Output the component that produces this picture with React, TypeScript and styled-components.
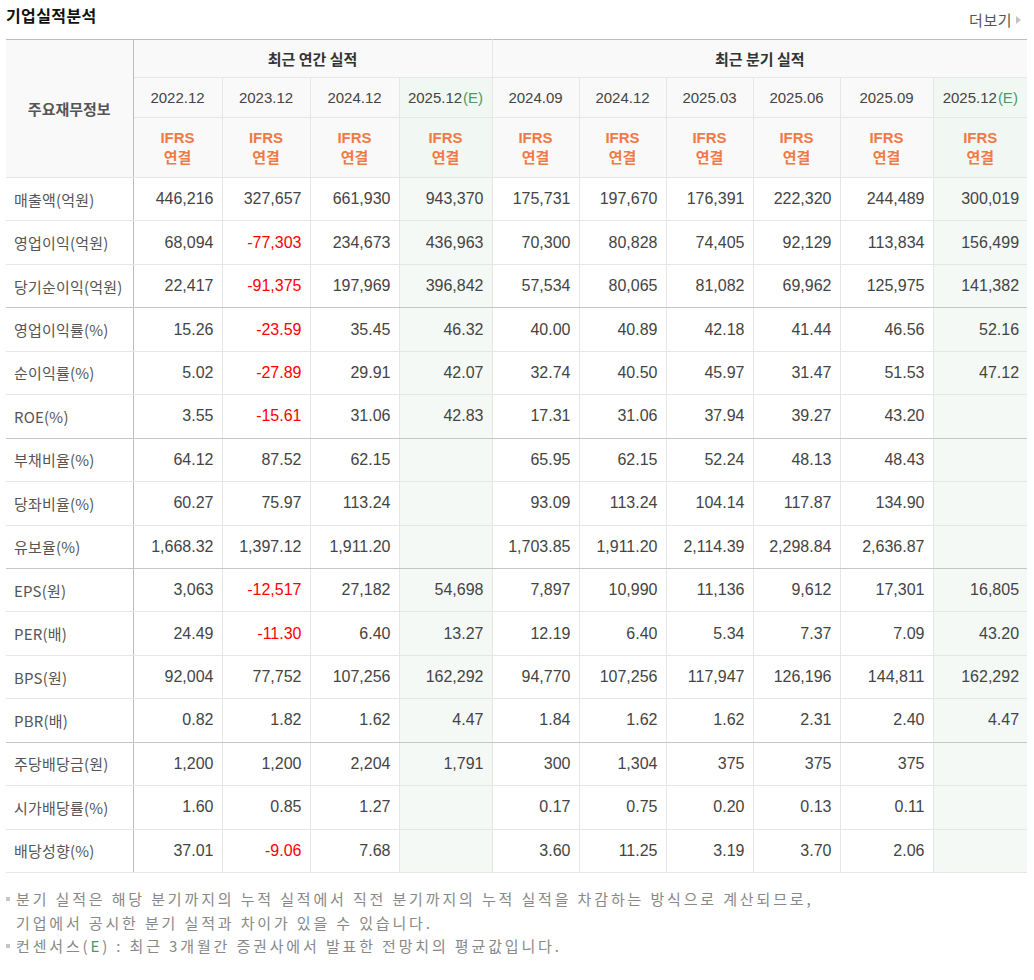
import React from "react";
import styled, { createGlobalStyle, css } from "styled-components";

const Global = createGlobalStyle`
  html, body { margin: 0; padding: 0; background: #fff; }
  body { font-family: "Liberation Sans", "Noto Sans CJK KR", sans-serif; color: #333; }
`;

const Page = styled.div`
  padding: 6px 7px 20px 6px;
  width: 1021px;
`;

const TitleBar = styled.div`
  display: flex;
  align-items: flex-start;
  justify-content: space-between;
  height: 33px;
`;

const Title = styled.h2`
  margin: 0;
  padding-top: 0;
  font-family: "Noto Sans CJK KR", sans-serif;
  font-size: 16px;
  font-weight: 700;
  color: #111;
  letter-spacing: 0.4px;
  line-height: 19px;
`;

const More = styled.a`
  display: flex;
  align-items: center;
  gap: 4px;
  margin-top: 4px;
  margin-right: 6px;
  font-family: "Noto Sans CJK KR", sans-serif;
  font-size: 15px;
  color: #555;
  text-decoration: none;
  line-height: 20px;
  letter-spacing: 0.5px;
`;

const Tri = styled.span`
  width: 0;
  height: 0;
  border-top: 4px solid transparent;
  border-bottom: 4px solid transparent;
  border-left: 5px solid #c4c4c4;
`;

const Table = styled.table`
  width: 1021px;
  border-collapse: collapse;
  table-layout: fixed;
  border-top: 1px solid #bdbdbd;
  border-bottom: 1px solid #bdbdbd;
`;

const Th = styled.th<{ $est?: boolean; $div?: boolean; $h?: number; $label?: boolean }>`
  background: ${(p) => (p.$est ? "#f1f7f3" : "#f9f9f9")};
  border: 1px solid #e6e6e6;
  border-top: none;
  ${(p) => p.$div && css`border-left: 1px solid #bdbdbd;`}
  ${(p) => p.$label && css`border-right: 1px solid #bdbdbd;`}
  height: ${(p) => p.$h ?? 37}px;
  padding: 0;
  font-weight: 400;
  text-align: center;
  vertical-align: middle;
  &:first-child { border-left: none; }
  &:last-child { border-right: none; }
`;

const GroupTitle = styled.span`
  font-family: "Noto Sans CJK KR", sans-serif;
  font-size: 15px;
  font-weight: 700;
  color: #333;
`;

const LabelHead = styled.span`
  font-family: "Noto Sans CJK KR", sans-serif;
  font-size: 15px;
  font-weight: 700;
  color: #555;
`;

const DateText = styled.span`
  font-family: "Liberation Sans", sans-serif;
  font-size: 15px;
  color: #444;
`;

const Est = styled.span`
  color: #4c9a63;
  margin-left: 1px;
`;

const Ifrs = styled.div`
  font-family: "Liberation Sans", "Noto Sans CJK KR", sans-serif;
  font-size: 15px;
  font-weight: 700;
  color: #ef7a45;
  line-height: 20px;
`;

const Row = styled.tr<{ $end?: boolean }>`
  height: 43.44px;
  ${(p) => p.$end && css`& > td { border-bottom: 1px solid #c6c6c6; }`}
`;

const Label = styled.td`
  border: 1px solid #e6e6e6;
  border-left: none;
  border-right: 1px solid #bdbdbd;
  padding: 0 0 0 8px;
  font-family: "Noto Sans CJK KR", sans-serif;
  font-size: 15px;
  color: #555;
  text-align: left;
  vertical-align: middle;
  white-space: nowrap;
  letter-spacing: 0.2px;
`;

const Cell = styled.td<{ $est?: boolean; $div?: boolean; $neg?: boolean }>`
  border: 1px solid #e6e6e6;
  ${(p) => p.$div && css`border-left: 1px solid #bdbdbd;`}
  background: ${(p) => (p.$est ? "#f4f9f6" : "#fff")};
  padding: 0 8px 0 0;
  text-align: right;
  vertical-align: middle;
  font-family: "Liberation Sans", sans-serif;
  font-size: 16px;
  color: ${(p) => (p.$neg ? "#ff0000" : "#444")};
  &:last-child { border-right: none; }
`;

const Notes = styled.ul`
  list-style: none;
  margin: 14px 0 0 0;
  padding: 0;
`;

const Note = styled.li`
  position: relative;
  padding-left: 10px;
  font-family: "Noto Sans CJK KR", sans-serif;
  font-size: 15px;
  line-height: 23.5px;
  color: #888;
  letter-spacing: 2.85px;
  white-space: nowrap;
  &::before {
    content: "";
    position: absolute;
    left: 0;
    top: 10px;
    width: 4px;
    height: 4px;
    background: #c8c8c8;
  }
`;

const NoteLine = styled.div``;

const Green = styled.span`
  color: #4c9a63;
`;

const widths = [127, 89, 88, 89, 93, 87, 87, 87, 87, 93, 94];
const dates = ["2022.12", "2023.12", "2024.12", "2025.12", "2024.09", "2024.12", "2025.03", "2025.06", "2025.09", "2025.12"];
const estCols = new Set([3, 9]);

type RowData = { label: string; v: string[]; end?: boolean };

const rows: RowData[] = [
  { label: "매출액(억원)", v: ["446,216", "327,657", "661,930", "943,370", "175,731", "197,670", "176,391", "222,320", "244,489", "300,019"] },
  { label: "영업이익(억원)", v: ["68,094", "-77,303", "234,673", "436,963", "70,300", "80,828", "74,405", "92,129", "113,834", "156,499"] },
  { label: "당기순이익(억원)", v: ["22,417", "-91,375", "197,969", "396,842", "57,534", "80,065", "81,082", "69,962", "125,975", "141,382"], end: true },
  { label: "영업이익률(%)", v: ["15.26", "-23.59", "35.45", "46.32", "40.00", "40.89", "42.18", "41.44", "46.56", "52.16"] },
  { label: "순이익률(%)", v: ["5.02", "-27.89", "29.91", "42.07", "32.74", "40.50", "45.97", "31.47", "51.53", "47.12"] },
  { label: "ROE(%)", v: ["3.55", "-15.61", "31.06", "42.83", "17.31", "31.06", "37.94", "39.27", "43.20", ""], end: true },
  { label: "부채비율(%)", v: ["64.12", "87.52", "62.15", "", "65.95", "62.15", "52.24", "48.13", "48.43", ""] },
  { label: "당좌비율(%)", v: ["60.27", "75.97", "113.24", "", "93.09", "113.24", "104.14", "117.87", "134.90", ""] },
  { label: "유보율(%)", v: ["1,668.32", "1,397.12", "1,911.20", "", "1,703.85", "1,911.20", "2,114.39", "2,298.84", "2,636.87", ""], end: true },
  { label: "EPS(원)", v: ["3,063", "-12,517", "27,182", "54,698", "7,897", "10,990", "11,136", "9,612", "17,301", "16,805"] },
  { label: "PER(배)", v: ["24.49", "-11.30", "6.40", "13.27", "12.19", "6.40", "5.34", "7.37", "7.09", "43.20"] },
  { label: "BPS(원)", v: ["92,004", "77,752", "107,256", "162,292", "94,770", "107,256", "117,947", "126,196", "144,811", "162,292"] },
  { label: "PBR(배)", v: ["0.82", "1.82", "1.62", "4.47", "1.84", "1.62", "1.62", "2.31", "2.40", "4.47"], end: true },
  { label: "주당배당금(원)", v: ["1,200", "1,200", "2,204", "1,791", "300", "1,304", "375", "375", "375", ""] },
  { label: "시가배당률(%)", v: ["1.60", "0.85", "1.27", "", "0.17", "0.75", "0.20", "0.13", "0.11", ""] },
  { label: "배당성향(%)", v: ["37.01", "-9.06", "7.68", "", "3.60", "11.25", "3.19", "3.70", "2.06", ""] },
];

export default function App() {
  return (
    <>
      <Global />
      <Page>
        <TitleBar>
          <Title>기업실적분석</Title>
          <More href="#">
            더보기
            <Tri />
          </More>
        </TitleBar>
        <Table>
          <colgroup>
            {widths.map((w, i) => (
              <col key={i} style={{ width: w }} />
            ))}
          </colgroup>
          <thead>
            <tr>
              <Th rowSpan={3} $label>
                <LabelHead>주요재무정보</LabelHead>
              </Th>
              <Th colSpan={4} $h={37}>
                <GroupTitle>최근 연간 실적</GroupTitle>
              </Th>
              <Th colSpan={6} $div $h={37}>
                <GroupTitle>최근 분기 실적</GroupTitle>
              </Th>
            </tr>
            <tr>
              {dates.map((d, i) => (
                <Th key={i} $est={estCols.has(i)} $div={i === 4} $h={39}>
                  <DateText>
                    {d}
                    {estCols.has(i) && <Est>(E)</Est>}
                  </DateText>
                </Th>
              ))}
            </tr>
            <tr>
              {dates.map((_, i) => (
                <Th key={i} $est={estCols.has(i)} $div={i === 4} $h={59}>
                  <Ifrs>IFRS</Ifrs>
                  <Ifrs>연결</Ifrs>
                </Th>
              ))}
            </tr>
          </thead>
          <tbody>
            {rows.map((r) => (
              <Row key={r.label} $end={r.end}>
                <Label>{r.label}</Label>
                {r.v.map((v, i) => (
                  <Cell key={i} $est={estCols.has(i)} $div={i === 4} $neg={v.startsWith("-")}>
                    {v}
                  </Cell>
                ))}
              </Row>
            ))}
          </tbody>
        </Table>
        <Notes>
          <Note>
            <NoteLine>분기 실적은 해당 분기까지의 누적 실적에서 직전 분기까지의 누적 실적을 차감하는 방식으로 계산되므로,</NoteLine>
            <NoteLine>기업에서 공시한 분기 실적과 차이가 있을 수 있습니다.</NoteLine>
          </Note>
          <Note>
            컨센서스(<Green>E</Green>) : 최근 3개월간 증권사에서 발표한 전망치의 평균값입니다.
          </Note>
        </Notes>
      </Page>
    </>
  );
}
